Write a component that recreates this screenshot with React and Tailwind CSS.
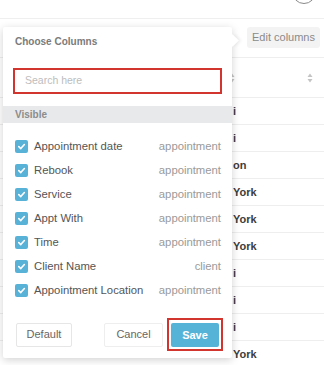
import React from "react";

// only the tail of each city shows to the right of the popover
const rows = ["i", "i", "on", "York", "York", "York", "i", "i", "i", "York"];

const columns = [
  { label: "Appointment date", group: "appointment" },
  { label: "Rebook", group: "appointment" },
  { label: "Service", group: "appointment" },
  { label: "Appt With", group: "appointment" },
  { label: "Time", group: "appointment" },
  { label: "Client Name", group: "client" },
  { label: "Appointment Location", group: "appointment" },
];

function SortIcon() {
  return (
    <svg width="6" height="10" viewBox="0 0 6 10" fill="#c4c4c4">
      <path d="M3 0.5 L5.5 4 H0.5 Z" />
      <path d="M3 9.5 L5.5 6 H0.5 Z" />
    </svg>
  );
}

function Check() {
  return (
    <span className="w-[13px] h-[13px] rounded-[2px] bg-[#58b1d6] flex items-center justify-center shrink-0">
      <svg width="9" height="9" viewBox="0 0 10 10" fill="none" stroke="white" strokeWidth="1.8" strokeLinecap="round" strokeLinejoin="round">
        <path d="M2 5.2 L4.2 7.3 L8.2 2.8" />
      </svg>
    </span>
  );
}

export default function App() {
  return (
    <div className="relative w-[324px] h-[365px] overflow-hidden bg-white font-['Liberation_Sans',Arial,sans-serif]">
      {/* ── Page behind ─────────────────────────────────────────── */}
      <div className="h-[19px] border-b border-[#efefef] flex justify-end pr-[8px]">
        <div className="w-[24px] h-[24px] rounded-full border border-[#8a8a8a] mt-[-20px]" />
      </div>

      <div className="h-[39px] border-b border-[#eeeeee] flex justify-end items-start pt-[8px] pr-[4px]">
        <button className="w-[73px] h-[21px] bg-[#f3f3f3] rounded-[3px] text-[11px] text-[#8a8a8a]">
          Edit columns
        </button>
      </div>

      <div className="h-[40px] border-b border-[#eeeeee] flex items-center pl-[229px] pr-[11px] justify-between">
        <SortIcon />
        <SortIcon />
      </div>

      {rows.map((city, i) => (
        <div key={i} className="h-[27px] border-b border-[#eeeeee] flex items-center pl-[233px] text-[11px] font-bold text-[#3d3d3d]">
          {city}
        </div>
      ))}

      {/* ── Choose columns popover ─────────────────────────────── */}
      <div className="absolute left-[3px] top-[27px] w-[229px] h-[331px] bg-white rounded-[2px] shadow-[0_2px_8px_rgba(0,0,0,0.18)] flex flex-col">
        <div className="absolute right-[-5px] top-[9px] w-[9px] h-[9px] bg-white rotate-45 shadow-[2px_-2px_3px_rgba(0,0,0,0.06)]" />

        <div className="relative pl-[12px] pt-[9px] text-[10px] leading-[12px] font-bold text-[#7b7b7b]">Choose Columns</div>

        <div className="relative mt-[20px] ml-[10px] w-[209px] h-[26px] border-2 border-[#d2352d] flex items-center pl-[10px] text-[10.5px] text-[#bdbdbd]">
          Search here
        </div>

        <div className="mt-[12px] h-[17px] bg-[#e8e9eb] flex items-center pl-[12px] text-[10px] font-bold text-[#8c8c8c]">
          Visible
        </div>

        <div className="pt-[11px] flex flex-col">
          {columns.map((c) => (
            <div key={c.label} className="h-[24px] flex items-center pl-[12px] pr-[11px]">
              <Check />
              <span className="ml-[6px] text-[11.3px] text-[#555]">{c.label}</span>
              <span className="ml-auto text-[11.3px] text-[#9a9a9a]">{c.group}</span>
            </div>
          ))}
        </div>

        <div className="mt-[16px] flex items-center pl-[13px]">
          <button className="w-[56px] h-[24px] border border-[#e6e6e6] rounded-[2px] text-[11px] text-[#666]">Default</button>
          <button className="ml-[32px] w-[59px] h-[24px] border border-[#eeeeee] rounded-[2px] text-[11px] text-[#666]">Cancel</button>
          <div className="ml-[4px] border-2 border-[#d2352d] p-[2px]">
            <button className="w-[48px] h-[24px] bg-[#56b3d8] rounded-[2px] text-[11px] font-bold text-white">Save</button>
          </div>
        </div>
      </div>
    </div>
  );
}
